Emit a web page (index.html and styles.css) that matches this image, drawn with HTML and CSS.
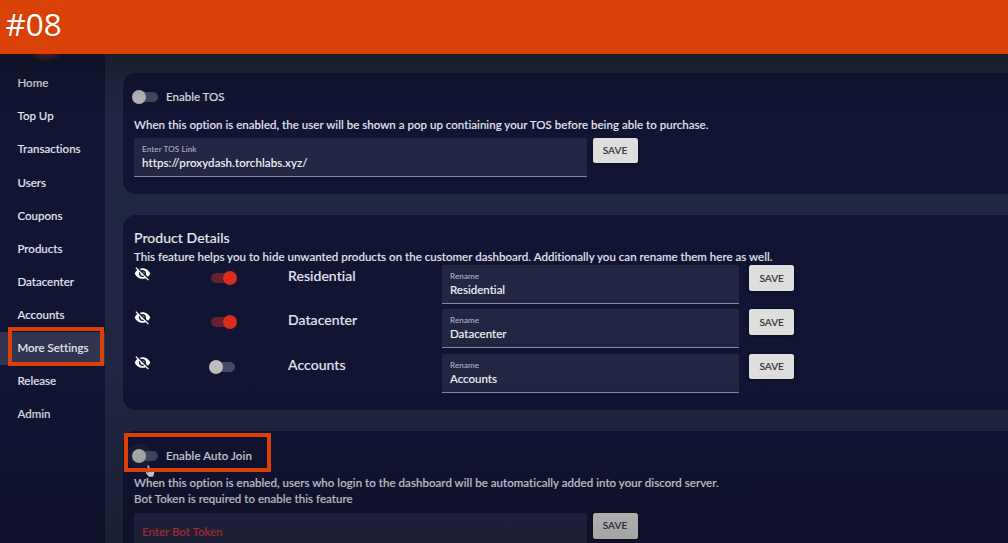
FILE: index.html
```html
<!DOCTYPE html>
<html lang="en">
<head>
<meta charset="utf-8">
<title>More Settings</title>
<link rel="stylesheet" href="styles.css">
</head>
<body>
<svg class="defs" width="0" height="0"><symbol id="eye-off" viewBox="0 0 24 24"><path d="M12 7c2.76 0 5 2.24 5 5 0 .65-.13 1.26-.36 1.83l2.92 2.92c1.51-1.26 2.7-2.89 3.43-4.75-1.73-4.39-6-7.5-11-7.5-1.4 0-2.74.25-3.98.7l2.16 2.16C10.74 7.13 11.35 7 12 7zM2 4.27l2.28 2.28.46.46C3.08 8.3 1.78 10.02 1 12c1.73 4.39 6 7.5 11 7.5 1.55 0 3.03-.3 4.38-.84l.42.42L19.73 22 21 20.73 3.27 3 2 4.27zM7.53 9.8l1.55 1.55c-.05.21-.08.43-.08.65 0 1.66 1.34 3 3 3 .22 0 .44-.03.65-.08l1.55 1.55c-.67.33-1.41.53-2.2.53-2.76 0-5-2.24-5-5 0-.79.2-1.53.53-2.2zm4.31-.78l3.15 3.15.02-.16c0-1.66-1.34-3-3-3l-.17.01z"/></symbol></svg>
<header class="banner">#08</header>
<div class="app">
  <nav class="sidebar">
    <span class="glow"></span>
    <a class="item">Home</a>
    <a class="item">Top Up</a>
    <a class="item">Transactions</a>
    <a class="item">Users</a>
    <a class="item">Coupons</a>
    <a class="item">Products</a>
    <a class="item">Datacenter</a>
    <a class="item">Accounts</a>
    <a class="item active">More Settings</a>
    <a class="item">Release</a>
    <a class="item">Admin</a>
  </nav>
  <main class="content">
    <section class="card tos">
      <div class="option"><span class="toggle"></span><span>Enable TOS</span></div>
      <p class="text">When this option is enabled, the user will be shown a pop up contiaining your TOS before being able to purchase.</p>
      <div class="form">
        <div class="field"><label>Enter TOS Link</label><span class="url">https://proxydash.torchlabs.xyz/</span></div>
        <button class="save">SAVE</button>
      </div>
    </section>
    <section class="card products">
      <h2>Product Details</h2>
      <p class="text">This feature helps you to hide unwanted products on the customer dashboard. Additionally you can rename them here as well.</p>
      <div class="rows">
        <div class="row">
          <svg class="eye"><use href="#eye-off"/></svg><span class="toggle on"></span><span class="name">Residential</span>
          <div class="field"><label>Rename</label><span>Residential</span></div><button class="save">SAVE</button>
        </div>
        <div class="row">
          <svg class="eye"><use href="#eye-off"/></svg><span class="toggle on"></span><span class="name">Datacenter</span>
          <div class="field"><label>Rename</label><span>Datacenter</span></div><button class="save">SAVE</button>
        </div>
        <div class="row">
          <svg class="eye"><use href="#eye-off"/></svg><span class="toggle"></span><span class="name">Accounts</span>
          <div class="field"><label>Rename</label><span>Accounts</span></div><button class="save">SAVE</button>
        </div>
      </div>
    </section>
    <section class="card join">
      <div class="option"><span class="toggle hover"></span><span class="join-label">Enable Auto Join</span></div>
      <p class="text users">When this option is enabled, users who login to the dashboard will be automatically added into your discord server.</p>
      <p class="text">Bot Token is required to enable this feature</p>
      <div class="form">
        <div class="field error"><span>Enter Bot Token</span></div>
        <button class="save">SAVE</button>
      </div>
    </section>
  </main>
  <svg class="cursor" viewBox="0 0 12 16"><path d="M3 1.5q1.5-1 2 .8l.9 4 4 .8q1.6.4 1.3 2l-.7 3.8-1 2.1H4.7L1 10.5q-.4-1.5 1-1.3l1.7 1z"/></svg>
</div>
<div class="mark mark-nav"></div>
<div class="mark mark-join"></div>
</body>
</html>
```

FILE: styles.css
```css
* { box-sizing: border-box; }
body {
  margin: 0;
  width: 1008px;
  height: 543px;
  overflow: hidden;
  position: relative;
  background: #202740;
  color: #e6e6f0;
  font: 500 11.5px/16px Lato, "Open Sans", sans-serif;
  font-variant-ligatures: none;
  white-space: nowrap;
}
.defs { position: absolute; }
.banner {
  height: 54px;
  padding-left: 5.5px;
  background: #da4106;
  color: #fff;
  font: 400 31.5px/48px "Open Sans", "Noto Sans", sans-serif;
}
.app {
  display: flex;
  height: 489px;
  position: relative;
  overflow: hidden;
  -webkit-text-stroke: .1px;
}
.app::after {
  content: "";
  position: absolute;
  inset: 0;
  pointer-events: none;
  background: linear-gradient(rgba(10,14,12,.38), rgba(10,14,12,.2) 20px, rgba(10,14,12,0) 60px, rgba(8,8,16,0) 320px, rgba(10,10,20,.1) 375px, rgba(12,12,18,.28) 489px);
}
.sidebar {
  width: 105px;
  padding-top: 12.7px;
  background: #111433;
  position: relative;
  overflow: hidden;
}
.glow {
  position: absolute;
  left: 27px;
  top: -12px;
  width: 38px;
  height: 20px;
  background: radial-gradient(closest-side, #8d2828, transparent);
}
.item {
  display: flex;
  align-items: center;
  height: 33.12px;
  padding-left: 17.5px;
}
.item.active { background: #303451; }
.content {
  flex: 1;
  padding: 18.5px 0 0 18px;
  display: flex;
  flex-direction: column;
  gap: 21.5px;
}
.card {
  background: #111433;
  border-radius: 13px 0 0 13px;
  padding-left: 11px;
  flex-shrink: 0;
}
.tos { height: 121px; padding-top: 16px; }
.products { height: 194.5px; padding-top: 14px; }
.join { height: 160px; padding-top: 16px; }
.text { margin: 0; letter-spacing: .035px; }
.option { display: flex; align-items: center; height: 17px; gap: 8px; }
.join-label { letter-spacing: .1px; }
.toggle {
  width: 24px;
  height: 10px;
  border-radius: 5px;
  background: #464a65;
  position: relative;
}
.toggle::before {
  content: "";
  position: absolute;
  left: -2px;
  top: -2px;
  width: 14px;
  height: 14px;
  border-radius: 50%;
  background: #bebdbf;
}
.toggle.on { background: #662131; }
.toggle.on::before { left: 12px; background: #d92d20; }
.toggle.hover::before { box-shadow: 0 0 0 5px rgba(170,170,180,.07); }
.tos .text { margin-top: 11px; }
.form { display: flex; align-items: flex-start; gap: 5.5px; margin-top: 5px; }
.form .field { width: 453px; }
.field {
  height: 39px;
  padding: 4px 8px 0;
  background: #222643;
  border-bottom: 1px solid #8488a2;
  border-radius: 2px 2px 0 0;
  display: flex;
  flex-direction: column;
}
.field label {
  font-size: 8px;
  line-height: 14px;
  letter-spacing: .15px;
  color: #a9aabd;
}
.field span { line-height: 14px; color: #f0f0f6; }
.field .url { letter-spacing: .09px; }
.save {
  width: 45px;
  height: 25.5px;
  padding: 0;
  border: 0;
  border-radius: 2.5px;
  background: #dedede;
  color: #303032;
  font: 500 10.2px/25px Lato, sans-serif;
  box-shadow: 0 1px 3px rgba(0,0,0,.45);
}
h2 { margin: 0; font: 500 14px/18px Lato, sans-serif; letter-spacing: .05px; }
.products .text { margin-top: 2px; }
.rows { display: grid; gap: 5.2px; width: 661px; margin-top: .3px; }
.row {
  display: grid;
  grid-template-columns: 77px 77px 154px 296.5px 45px;
  height: 39px;
}
.row .save { margin-left: 10.7px; }
.eye { width: 17px; height: 17px; fill: #fff; }
.row .toggle { margin-top: 8px; }
.row .name { font-size: 14px; line-height: 22px; letter-spacing: .05px; }
.join .text { line-height: 16.5px; }
.join .users { margin-top: 10.5px; letter-spacing: .05px; }
.join .form { margin-top: 5.5px; }
.field.error { padding-top: 12px; }
.field.error span { color: #d8323c; }
.cursor { position: absolute; left: 145px; top: 410px; width: 10px; height: 14px; fill: #e2e2e2; }
.mark { position: absolute; border: 4px solid #da4106; }
.mark-nav { left: 8px; top: 327px; width: 96px; height: 39px; }
.mark-join { left: 124px; top: 433px; width: 147px; height: 39px; }
```
